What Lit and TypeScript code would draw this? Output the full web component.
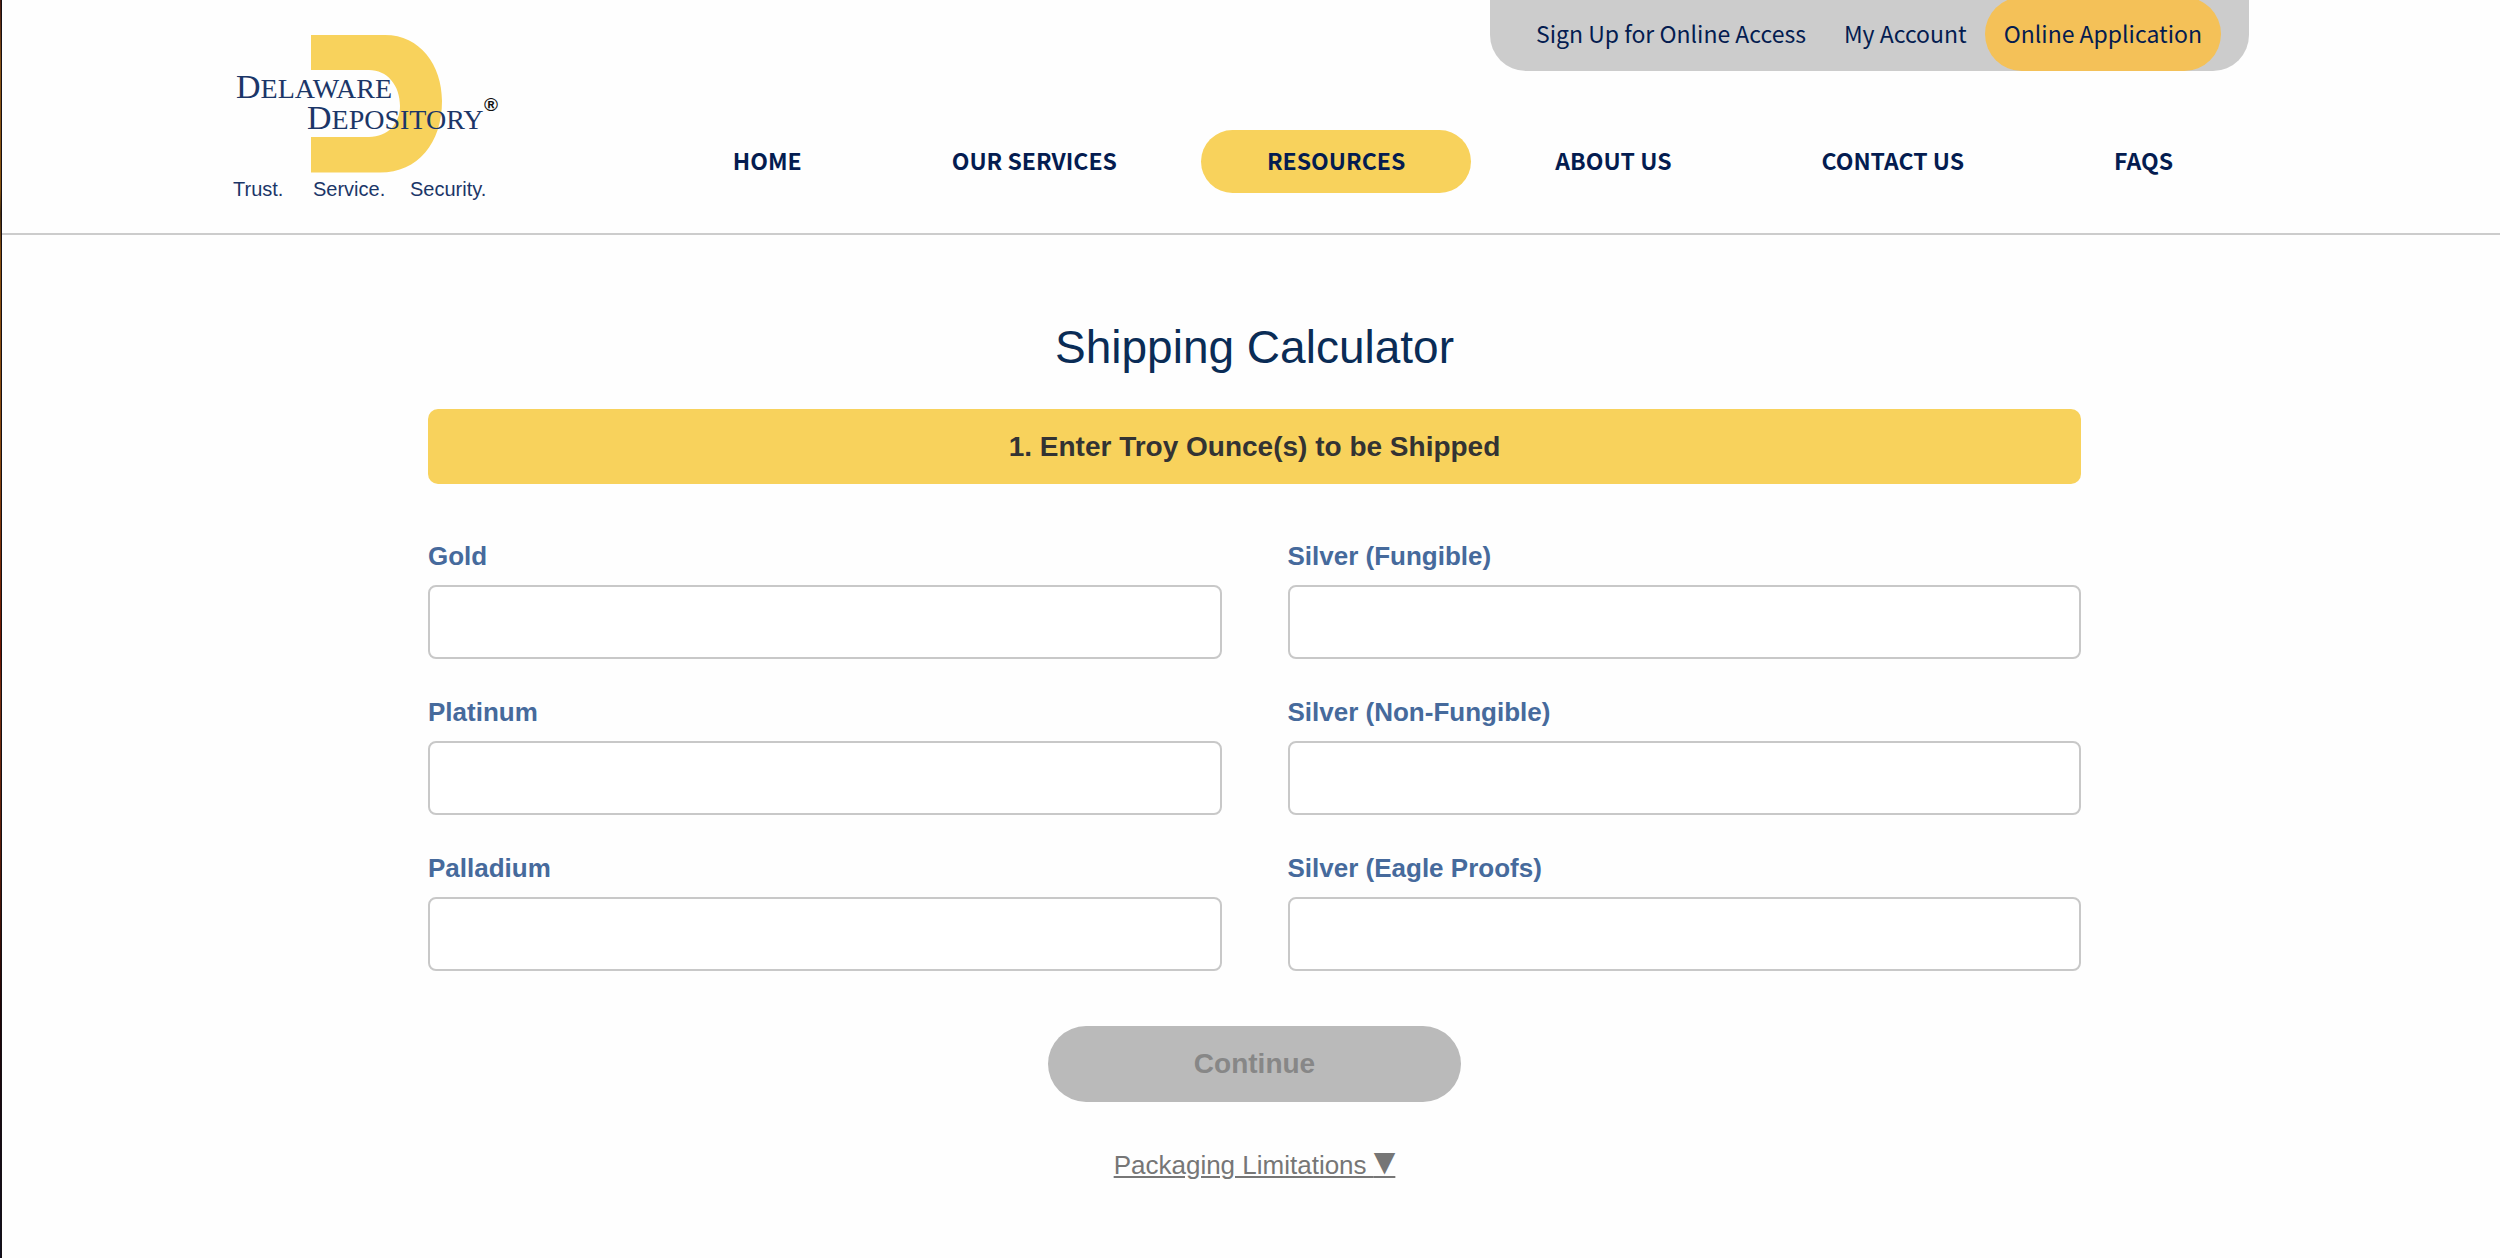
import { LitElement, html, css, svg } from "lit";
import { customElement, property, state } from "lit/decorators.js";

@customElement("dd-logo")
class DdLogo extends LitElement {
  static styles = css`
    :host { display: block; }
    .mark { display: block; width: 270px; height: 170px; overflow: visible; }
    .name { font-family: "Liberation Serif", serif; fill: #1b3668; }
    .tag { font-family: "Liberation Sans", sans-serif; font-size: 20px; fill: #1b3668; }
    .reg { font-family: "Liberation Sans", sans-serif; font-size: 19px; font-weight: bold; fill: #111; }
    .cap { font-size: 34px; }
    .small { font-size: 28px; }
  `;
  render() {
    return html`
      <svg class="mark" viewBox="0 0 270 170" role="img" aria-label="Delaware Depository">
        ${svg`
          <path fill="#f8d25c" d="M80 0H154C189 0 211 30 211 66C211 108 187 137.500 149 137.500H80V102H138C157 102 169 88 169 71C169 50 156 35 138 35H80Z"/>
          <text class="name"><tspan class="cap" x="5" y="63">D</tspan><tspan class="small">ELAWARE</tspan><tspan class="cap" x="76" y="94">D</tspan><tspan class="small">EPOSITORY</tspan></text>
          <text class="reg" x="253" y="76">®</text>
          <text class="tag" x="2" y="161">Trust.</text>
          <text class="tag" x="82" y="161">Service.</text>
          <text class="tag" x="179" y="161">Security.</text>
        `}
      </svg>
    `;
  }
}

@customElement("dd-header")
class DdHeader extends LitElement {
  @property() current = "RESOURCES";

  private links = ["HOME", "OUR SERVICES", "RESOURCES", "ABOUT US", "CONTACT US", "FAQS"];

  static styles = css`
    :host { display: block; font-family: "Noto Sans CJK SC", sans-serif; }
    a { box-sizing: border-box; padding-bottom: 5px; color: #041c50; text-decoration: none; white-space: nowrap; }
    .header {
      display: flex;
      justify-content: space-between;
      padding: 0 251px 0 229px;
      height: 233px;
      border-bottom: 2px solid #ccc;
    }
    .brand { display: block; margin-top: 35px; }
    .side { display: flex; flex-direction: column; align-items: flex-end; gap: 59px; }
    .account {
      display: flex;
      align-items: center;
      gap: 38px;
      height: 71px;
      padding: 0 28px 0 46px;
      border-radius: 0 0 36px 36px;
      background: #ccc;
      font-size: 23px;
    }
    .apply {
      display: flex;
      align-items: center;
      height: 74px;
      margin: -3px 0 0 -20px;
      padding: 0 19px 3px;
      border-radius: 37px;
      background: #f4c158;
    }
    .menu { display: flex; gap: 18px; margin-right: 10px; font-weight: bold; font-size: 23px; }
    .item {
      display: flex;
      align-items: center;
      height: 63px;
      padding: 0 66px 3px;
      border-radius: 32px;
    }
    .active { background: #f8d25c; }
  `;

  render() {
    return html`
      <header class="header">
        <a class="brand" href="#"><dd-logo></dd-logo></a>
        <div class="side">
          <nav class="account" aria-label="Account">
            <a href="#">Sign Up for Online Access</a>
            <a href="#">My Account</a>
            <a class="apply" href="#">Online Application</a>
          </nav>
          <nav class="menu" aria-label="Main">
            ${this.links.map(
              (l) => html`<a class="item ${l === this.current ? "active" : ""}" href="#">${l}</a>`
            )}
          </nav>
        </div>
      </header>
    `;
  }
}

@customElement("dd-calculator")
class DdCalculator extends LitElement {
  @state() private values: Record<string, string> = {};

  private fields = [
    ["gold", "Gold"],
    ["silver-fungible", "Silver (Fungible)"],
    ["platinum", "Platinum"],
    ["silver-non-fungible", "Silver (Non-Fungible)"],
    ["palladium", "Palladium"],
    ["silver-eagle", "Silver (Eagle Proofs)"],
  ];

  static styles = css`
    :host { display: block; font-family: "Liberation Sans", sans-serif; }
    .main {
      display: flex;
      flex-direction: column;
      align-items: center;
      max-width: 1653px;
      margin: 0 auto;
      padding: 84px 0 64px 7px;
    }
    .title { margin: 0; font-size: 46px; line-height: 56px; font-weight: normal; color: #0a2c56; }
    .form { display: flex; flex-direction: column; align-items: center; width: 100%; }
    .step {
      box-sizing: border-box;
      width: 100%;
      margin: 34px 0 0;
      border-radius: 10px;
      background: #f8d25c;
      font-size: 28px;
      line-height: 75px;
      font-weight: bold;
      text-align: center;
      color: #333;
    }
    .grid {
      display: grid;
      grid-template-columns: 1fr 1fr;
      gap: 38px 66px;
      width: 100%;
      margin-top: 57px;
    }
    .field { display: flex; flex-direction: column; gap: 13px; }
    .label { font-size: 26px; line-height: 31px; font-weight: bold; color: #466a9c; }
    .input {
      box-sizing: border-box;
      width: 100%;
      height: 74px;
      padding: 0 20px;
      border: 2px solid #c8c8c8;
      border-radius: 8px;
      background: #fff;
      font: 26px "Liberation Sans", sans-serif;
    }
    .next {
      width: 413px;
      height: 76px;
      margin-top: 55px;
      border: 0;
      border-radius: 38px;
      background: #bababa;
      color: #878787;
      font: bold 28px "Liberation Sans", sans-serif;
    }
    .limits {
      margin-top: 46px;
      font-size: 26px;
      line-height: 32px;
      color: #767676;
      text-decoration: underline;
    }
    .arrow { font-family: "DejaVu Sans", sans-serif; font-size: 28px; line-height: 1; vertical-align: 3px; }
  `;

  private setValue(id: string, e: Event) {
    this.values = { ...this.values, [id]: (e.target as HTMLInputElement).value };
  }

  render() {
    const empty = !Object.values(this.values).some(Boolean);
    return html`
      <main class="main">
        <h1 class="title">Shipping Calculator</h1>
        <form class="form">
          <h2 class="step">1. Enter Troy Ounce(s) to be Shipped</h2>
          <div class="grid">
            ${this.fields.map(
              ([id, label]) => html`
                <div class="field">
                  <label class="label" for=${id}>${label}</label>
                  <input class="input" id=${id} type="text" inputmode="decimal"
                    @input=${(e: Event) => this.setValue(id, e)} />
                </div>
              `
            )}
          </div>
          <button class="next" type="button" ?disabled=${empty}>Continue</button>
        </form>
        <a class="limits" href="#">Packaging Limitations <span class="arrow">▼</span></a>
      </main>
    `;
  }
}

@customElement("app-root")
class AppRoot extends LitElement {
  static styles = css`
    :host { display: block; background: #fefefe; }
    .page {
      box-sizing: border-box;
      min-height: 100vh;
      padding-left: 2px;
      background:
        linear-gradient(#4a1a10, #8a5418 5%, #8a5410 15%, #4a3010 17%, #8a5010 20%, #8a4a10 36%, #701400 52%, #7a3010 55%, #5a1c08 68%, #200404 80%, #101020) 0 0 / 1px 100% no-repeat,
        linear-gradient(#151015, #151015) 1px 0 / 1px 100% no-repeat;
    }
  `;
  render() {
    return html`
      <div class="page">
        <dd-header></dd-header>
        <dd-calculator></dd-calculator>
      </div>
    `;
  }
}
